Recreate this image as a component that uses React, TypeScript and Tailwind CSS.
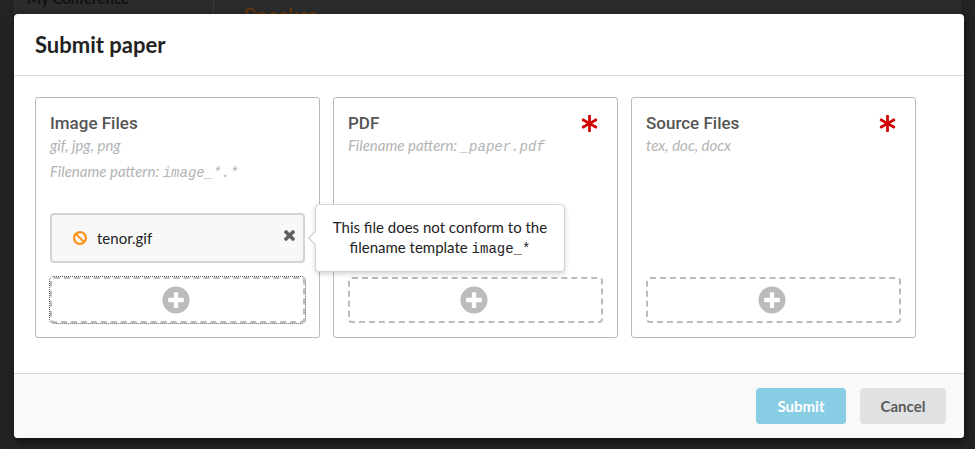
import { ReactNode } from "react";
import clsx from "clsx";
import { FaAsterisk, FaBan, FaPlusCircle } from "react-icons/fa";

interface IFileType {
    name: string;
    extensions?: string;
    pattern?: string;
    required?: boolean;
    focused?: boolean;
    children?: ReactNode;
}

function FileType({ name, extensions, pattern, required, focused, children }: IFileType) {
    return (
        <section className="flex min-h-[241px] flex-col rounded-[3px] border border-[#b9b9b9] p-3.5">
            <div className="flex items-center justify-between">
                <h3 className="font-['Roboto',sans-serif] text-[17px] font-medium leading-[22px] text-[#555555]">{name}</h3>
                {required && <RequiredMark />}
            </div>
            {extensions && <p className="text-[15px] italic leading-[22px] text-[#b3b3b3]">{extensions}</p>}
            {pattern && (
                <p className={clsx("text-[15px] italic leading-[22px] text-[#b3b3b3]", extensions && "mt-1")}>
                    Filename pattern: <code className="font-['Liberation_Mono',monospace] text-[14px]">{pattern}</code>
                </p>
            )}
            <div className="mt-auto flex flex-col gap-3.5">
                {children}
                <button
                    type="button"
                    aria-label={`Add ${name}`}
                    className={clsx(
                        "flex h-[46px] w-full items-center justify-center rounded-[4px] border-2 border-dashed border-[#bbbbbb] text-[#bbbbbb]",
                        focused && "outline-1 outline-dotted outline-[#555555]"
                    )}
                >
                    <FaPlusCircle className="mr-1 size-7" />
                </button>
            </div>
        </section>
    );
}

function RequiredMark() {
    return (
        <span className="mr-[5px] text-[#d00000]" title="Required">
            <FaAsterisk className="size-[17px]" />
        </span>
    );
}

function CrossIcon() {
    return (
        <svg viewBox="110 366 1188 1188" className="size-[11px]" fill="currentColor" aria-hidden="true">
            <path d="M1298 1322q0 40-28 68l-136 136q-28 28-68 28t-68-28l-294-294-294 294q-28 28-68 28t-68-28l-136-136q-28-28-28-68t28-68l294-294-294-294q-28-28-28-68t28-68l136-136q28-28 68-28t68 28l294 294 294-294q28-28 68-28t68 28l136 136q28 28 28 68t-28 68l-294 294 294 294q28 28 28 68z" />
        </svg>
    );
}

export default function App() {
    return (
        <div className="relative min-h-screen overflow-hidden bg-[#232323] pt-3.5 pr-[11px] pb-[11px] pl-3.5 font-['Lato',sans-serif] text-[#222222]">
            <div className="absolute inset-x-3.5 top-0 flex h-3.5 border-l border-[#303030] bg-[#2b2b2b]">
                <div className="w-[199px] border-r border-[#3a3a3a] pl-3">
                    <p className="-mt-3 text-[15px] font-bold leading-5 text-[#111111]">My Conference</p>
                </div>
                <p className="pl-[30px] pt-1 font-['Roboto',sans-serif] text-[20px] leading-6 text-[#6b3706]">Speaker</p>
            </div>

            <div
                role="dialog"
                aria-labelledby="title"
                className="relative flex min-h-[424px] flex-col rounded-[4px] bg-white shadow-[1px_3px_8px_rgba(0,0,0,0.6)]"
            >
                <header className="border-b border-[#dcdcdc] px-[21px] pt-[15px] pb-3.5">
                    <h2 id="title" className="text-[22px] font-bold leading-8">Submit paper</h2>
                </header>

                <main className="grid flex-1 grid-cols-3 items-start gap-[13px] pt-[21px] pr-12 pb-[35px] pl-[21px]">
                    <FileType name="Image Files" extensions="gif, jpg, png" pattern="image_*.*" focused>
                        <div className="relative flex h-[50px] items-center rounded-[4px] border-2 border-[#d6d2d0] bg-[#f8f8f8] pl-[21px]">
                            <FaBan className="mr-2.5 size-3.5 text-[#ff8c0a]" stroke="currentColor" strokeWidth="14" />
                            <span className="text-[15px] leading-5">tenor.gif</span>
                            <button type="button" aria-label="Remove tenor.gif" className="mr-2 mb-1.5 ml-auto text-[#606060]">
                                <CrossIcon />
                            </button>
                            <div
                                role="tooltip"
                                className="absolute top-1/2 left-full z-10 ml-3 w-[250px] -translate-y-1/2 rounded-[4px] border border-[#d4d4d5] bg-white px-4 py-3 text-center text-[15px] leading-5 shadow-[0_2px_5px_rgba(34,36,38,0.2)]"
                            >
                                <span className="absolute top-1/2 -left-[6px] size-[10px] -translate-y-1/2 rotate-45 border-b border-l border-[#c8c8c8] bg-white" />
                                This file does not conform to the filename template{" "}
                                <code className="font-['Liberation_Mono',monospace] text-[14px]">image_*</code>
                            </div>
                        </div>
                    </FileType>
                    <FileType name="PDF" pattern="_paper.pdf" required />
                    <FileType name="Source Files" extensions="tex, doc, docx" required />
                </main>

                <footer className="flex justify-end gap-3.5 rounded-b-[4px] border-t border-[#d8d8d8] bg-[#f9f9f9] px-[18px] py-3.5">
                    <button type="button" className="h-9 w-[90px] rounded-[4px] bg-[#89cde4] text-[15px] font-bold text-white">Submit</button>
                    <button type="button" className="h-9 w-[86px] rounded-[4px] bg-[#e0e1e2] text-[15px] font-bold text-[#5c5c5c]">Cancel</button>
                </footer>
            </div>
        </div>
    );
}
